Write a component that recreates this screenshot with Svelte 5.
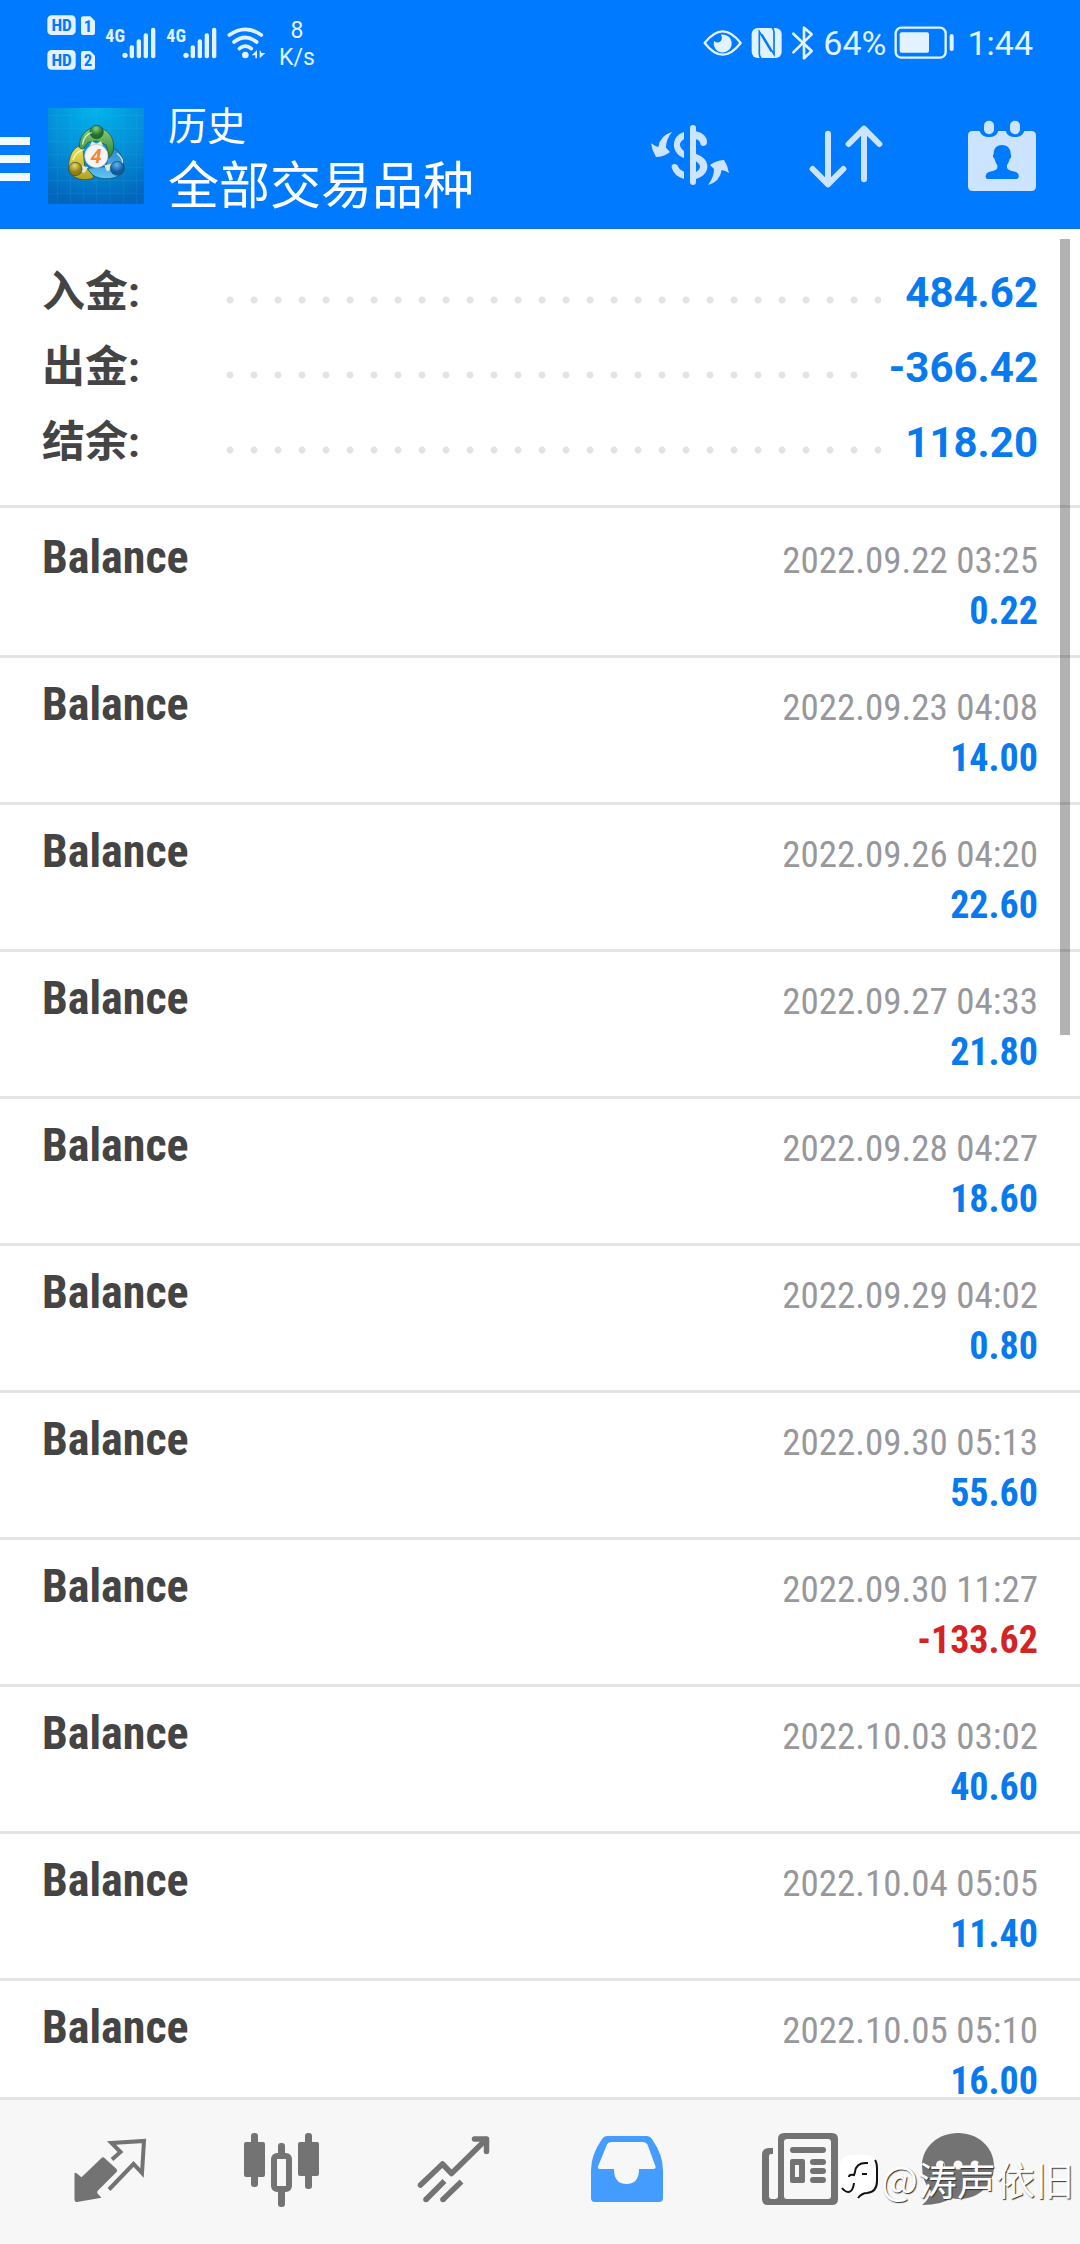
<script lang="ts">
  const summary: Array<{ label: string; value: string }> = [
    { label: '入金:', value: '484.62' },
    { label: '出金:', value: '-366.42' },
    { label: '结余:', value: '118.20' }
  ];

  const deals: Array<{ time: string; amount: number }> = [
    { time: '2022.09.22 03:25', amount: 0.22 },
    { time: '2022.09.23 04:08', amount: 14 },
    { time: '2022.09.26 04:20', amount: 22.6 },
    { time: '2022.09.27 04:33', amount: 21.8 },
    { time: '2022.09.28 04:27', amount: 18.6 },
    { time: '2022.09.29 04:02', amount: 0.8 },
    { time: '2022.09.30 05:13', amount: 55.6 },
    { time: '2022.09.30 11:27', amount: -133.62 },
    { time: '2022.10.03 03:02', amount: 40.6 },
    { time: '2022.10.04 05:05', amount: 11.4 },
    { time: '2022.10.05 05:10', amount: 16 }
  ];
</script>

<div class="app">
  <header>
    <div class="status-bar">
      <div class="status-group">
        <svg class="hd" viewBox="141 45 147 165">
          <rect x="142" y="46" width="85" height="59" rx="13" />
          <path d="M249 49h22l14 14v36q0 6-6 6h-30q-6 0-6-6V55q0-6 6-6z" />
          <rect x="142" y="150" width="85" height="59" rx="13" />
          <path d="M249 153h22l14 14v36q0 6-6 6h-30q-6 0-6-6v-44q0-6 6-6z" />
          <g class="knockout">
            <text x="185" y="94" font-size="52">HD</text>
            <text x="264" y="95" font-size="50">1</text>
            <text x="185" y="198" font-size="52">HD</text>
            <text x="264" y="199" font-size="50">2</text>
          </g>
        </svg>
        {#each [1, 2] as sim}
          <svg class="signal" viewBox="318 60 156 132" aria-label="SIM {sim}">
            <text x="319" y="122" font-size="54">4G</text>
            <circle cx="378" cy="163" r="8" />
            <rect x="392" y="133" width="13" height="39" rx="6" />
            <rect x="413" y="115" width="13" height="57" rx="6" />
            <rect x="434" y="97" width="13" height="75" rx="6" />
            <rect x="456" y="80" width="13" height="92" rx="6" />
          </svg>
        {/each}
        <svg class="wifi" viewBox="680 78 117 96">
          <g fill="none" stroke="#e2f3ff" stroke-width="11" stroke-linecap="round">
            <path d="M687 102Q735 68 783 102" />
            <path d="M701 123Q735 96 769 123" />
            <path d="M717 143Q735 128 753 143" />
          </g>
          <circle cx="735" cy="162" r="10" />
          <path d="M770 147v25h-5v-9h-11zM778 147v25l17-16h-11z" />
        </svg>
        <div class="speed">
          <span>8</span>
          <span>K/s</span>
        </div>
      </div>
      <div class="status-group system">
        <svg class="eye" viewBox="190 78 120 96">
          <path d="M195 126Q249 56 303 126Q249 196 195 126z" fill="none" stroke="#e2f3ff" stroke-width="7" stroke-linejoin="round" />
          <path d="M243 101a27 27 0 1 1-20 19a13 13 0 1 0 20-19z" />
        </svg>
        <svg class="nfc" viewBox="338 78 96 96">
          <rect x="340" y="81" width="90" height="90" rx="18" />
          <path d="M369 173q-6-6-6-14V92l36 60M401 79q6 6 6 14v67l-36-60" fill="none" stroke="#007aff" stroke-width="5" />
        </svg>
        <svg class="bluetooth" viewBox="460 72 72 108">
          <path d="M467 98l55 52-23 22V80l23 20-55 54" fill="none" stroke="#e2f3ff" stroke-width="8" stroke-linecap="round" stroke-linejoin="round" />
        </svg>
        <span class="clock">64%</span>
        <svg class="battery" viewBox="766 78 183 99">
          <rect x="771" y="83" width="150" height="90" rx="17" fill="none" stroke="#e2f3ff" stroke-width="7" />
          <rect x="783" y="97" width="88" height="61" rx="6" />
          <rect x="933" y="102" width="12" height="51" rx="6" />
        </svg>
        <span class="clock time">1:44</span>
      </div>
    </div>

    <div class="toolbar">
      <button class="menu" aria-label="菜单"><i></i><i></i><i></i></button>
      <svg class="logo" viewBox="144 327 288 288">
        <defs>
          <radialGradient id="bg" cx="0.5" cy="0" r="1">
            <stop offset="0" stop-color="#00b4ec" />
            <stop offset="0.55" stop-color="#058dd6" />
            <stop offset="1" stop-color="#0266bd" />
          </radialGradient>
          <linearGradient id="green" x2="0" y2="1"><stop stop-color="#8fcf75" /><stop offset="1" stop-color="#27812e" /></linearGradient>
          <linearGradient id="gold" x2="0" y2="1"><stop stop-color="#f1e65a" /><stop offset="1" stop-color="#b5a01c" /></linearGradient>
          <linearGradient id="blue" x2="0" y2="1"><stop stop-color="#2f86cf" /><stop offset="1" stop-color="#5ec4f5" /></linearGradient>
          <radialGradient id="green-head" cx="0.45" cy="0.25"><stop stop-color="#8ad07c" /><stop offset="1" stop-color="#1e6f28" /></radialGradient>
          <radialGradient id="gold-head" cx="0.45" cy="0.25"><stop stop-color="#e9dc66" /><stop offset="1" stop-color="#927d13" /></radialGradient>
          <radialGradient id="blue-head" cx="0.45" cy="0.25"><stop stop-color="#62b6ee" /><stop offset="1" stop-color="#0c5ba4" /></radialGradient>
        </defs>
        <rect x="144" y="327" width="288" height="288" fill="url(#bg)" />
        <path d="M172 327v288M212 327v288M251 327v288M290 327v288M330 327v288M370 327v288M409 327v288M144 350h288M144 389h288M144 428h288M144 467h288M144 506h288M144 545h288M144 584h288" stroke="#4fc3f2" stroke-opacity="0.2" stroke-width="2" />
        <g stroke="#174a4b" stroke-width="2">
          <path d="M262 508c10 22 32 32 62 31 24-2 42-10 46-28 4-30-8-54-28-62l-14 10-10 44z" fill="url(#blue)" />
          <path d="M250 438c-30 2-46 34-44 72 4 24 36 38 66 30 10-3 10-6 6-12l-24-28-4-40z" fill="url(#gold)" />
          <path d="M238 446c-2-32 20-60 50-60 34 0 54 28 53 58-1 18-8 28-14 32l-8-38-30-12-24 4-16 22z" fill="url(#green)" />
          <path d="M276 426l13 8 14-8 6 14h-40zM242 500l-3 16 14 6 12-18zM336 494l-3 18-12 5-8-18z" fill="#dce9d5" stroke="none" />
          <circle cx="290" cy="399" r="20" fill="url(#green-head)" />
          <circle cx="226" cy="510" r="20" fill="url(#gold-head)" />
          <circle cx="352" cy="508" r="21" fill="url(#blue-head)" />
        </g>
        <path d="M248 435q4-26 26-34M219 482q8-24 32-30M352 464q16 12 16 26" fill="none" stroke="#fff" stroke-opacity="0.75" stroke-width="4" stroke-linecap="round" />
        <circle cx="289" cy="471" r="35" fill="#f5f5f5" stroke="#b9b9b9" stroke-width="2" />
        <text x="288" y="492" class="four">4</text>
      </svg>
      <div class="titles">
        <h2>历史</h2>
        <h1>全部交易品种</h1>
      </div>
      <button class="action" aria-label="货币">
        <svg viewBox="6 327 288 288">
          <path d="M96 396Q60 406 55 441Q44 438 33 430Q36 452 48 471Q72 471 90 456L78 443Q78 418 96 396z" />
          <path d="M204 555Q240 545 245 510Q256 512 267 519Q264 498 252 480Q228 481 210 495L222 507Q222 532 204 555z" />
          <rect x="150" y="375" width="18" height="180" rx="9" />
          <path d="M132 396v21q-24 17 0 36v21c-40-14-40-66 0-78z" />
          <path d="M132 537v-22q-14-5-18-16c-5-11-21-9-19 3q6 26 37 35z" />
          <path d="M168 394c20 4 34 18 33 33 0 14-20 15-20 3q-3-10-13-12z" />
          <path d="M168 462c46 15 46 61 0 75v-21q24-15 0-32z" />
        </svg>
      </button>
      <button class="action" aria-label="排序">
        <svg viewBox="474 327 288 288">
          <path d="M564 401v152M518 507l46 46 46-46M672 538V386M626 432l46-46 46 46" fill="none" stroke="#cce4ff" stroke-width="18" stroke-linecap="round" stroke-linejoin="round" />
        </svg>
      </button>
      <button class="action" aria-label="日期">
        <svg viewBox="942 327 288 288">
          <path d="M998 393h21q5 18 28 18t28-18h22q5 18 28 18t28-18h21q14 0 14 14v152q0 14-14 14H998q-14 0-14-14V407q0-14 14-14z" />
          <rect x="1032" y="362" width="30" height="41" rx="15" />
          <rect x="1110" y="362" width="30" height="41" rx="15" />
          <path d="M1086 435c18 0 26 12 26 27 3 4 2 12-3 15-2 9-5 14-8 18v9q4 8 24 11 13 4 11 16 0 6-8 6h-84q-7 0-7-6-1-12 12-16 20-3 23-11v-9c-4-4-6-9-8-18-5-3-7-11-3-15 0-15 7-27 25-27z" fill="#007aff" />
        </svg>
      </button>
    </div>
  </header>

  <main>
    <dl class="summary">
      {#each summary as { label, value }}
        <div class="summary-row">
          <dt>{label}</dt>
          <span class="leader"></span>
          <dd>{value}</dd>
        </div>
      {/each}
    </dl>

    <ul class="deals">
      {#each deals as { time, amount }}
        <li>
          <strong>Balance</strong>
          <div class="deal-info">
            <time>{time}</time>
            <span class="amount" class:negative={amount < 0}>{amount.toFixed(2)}</span>
          </div>
        </li>
      {/each}
    </ul>
  </main>
  <div class="scroll-thumb"></div>

  <nav>
    <a href="#quotes" aria-label="行情">
      <svg viewBox="0 0 96 96">
        <path d="M12.500 50q0-2 2-.8L19.500 53.300 39.500 34q1.500-1.500 3 0l12 11q1.500 1.500 0 3L36 66.500q-1.500 1.500-.5 3l4 4.200L15 78q-2.500.3-2.500-2.500z" />
        <path d="M50 35.500l8.500-7.500-9-9L82 17l-2 32-8.500-9L47 65.500" fill="none" stroke="#737373" stroke-width="4" />
      </svg>
    </a>
    <a href="#chart" aria-label="图表">
      <svg viewBox="0 0 96 96">
        <rect x="10" y="18" width="21" height="35" rx="2" />
        <rect x="17" y="9" width="7" height="54" rx="3" />
        <rect x="64" y="18" width="21" height="34" rx="2" />
        <rect x="71" y="9" width="7" height="56" rx="3" />
        <rect x="44" y="19" width="7" height="14" rx="3" />
        <rect x="44" y="64" width="7" height="19" rx="3" />
        <rect x="40" y="32" width="15" height="33" rx="3" fill="none" stroke="#737373" stroke-width="6" />
      </svg>
    </a>
    <a href="#trade" aria-label="交易">
      <svg viewBox="0 0 96 96">
        <g fill="none" stroke="#737373" stroke-width="5.500" stroke-linejoin="round">
          <path d="M14.500 61L36.500 40l9 9.500L80 15.500" stroke-linecap="round" />
          <path d="M68.500 15h12v12.500" stroke-linecap="round" />
          <path d="M20 75.500L38.500 57M37 75.500L55.500 57.500" />
        </g>
        <circle cx="20" cy="75.500" r="2.800" />
        <circle cx="37" cy="75.500" r="2.800" />
      </svg>
    </a>
    <a href="#history" class="active" aria-label="历史" aria-current="page">
      <svg viewBox="0 0 96 96">
        <path fill-rule="evenodd" d="M29 12h40q3 0 5 3 11 16 11 31v28q0 4-4 4H17q-4 0-4-4V46q0-15 11-31 2-3 5-3zM33 18q-3 0-4 2.500l-9 22Q19.500 45 22 45h14q0 15 12.500 15T61 45h14q3 0 2.500-2.500l-8-22Q68 18 65 18z" />
      </svg>
    </a>
    <a href="#news" aria-label="新闻">
      <svg viewBox="0 0 96 96">
        <path fill-rule="evenodd" d="M34 9h48q6 0 6 6v60q0 6-6 6H18q-6 0-6-6V31q0-7 7-7h4v6h-2q-2 0-2 2v40q0 3 3 3h3q3 0 3-3V15q0-6 6-6zM37 15q-3 0-3 3v54q0 3 3 3h41q3 0 3-3V18q0-3-3-3z" />
        <rect x="40" y="23" width="36" height="6" rx="3" />
        <path fill-rule="evenodd" d="M42 35h11q2 0 2 2v20q0 2-2 2H42q-2 0-2-2V37q0-2 2-2zM45 41v12h4V41z" />
        <rect x="60" y="35" width="16" height="6" rx="3" />
        <rect x="60" y="44" width="16" height="6" rx="3" />
        <rect x="60" y="53" width="16" height="6" rx="3" />
      </svg>
    </a>
    <a href="#chat" aria-label="聊天">
      <svg viewBox="0 0 96 96">
        <path d="M36 9c20 0 36 14 36 33S56 75 38 75q-5 0-9-1-9 7-29 7 7-5 9-14Q0 58 0 42C0 23 16 9 36 9z" />
        <g fill="#f7f7f7"><circle cx="18.500" cy="41" r="4.500" /><circle cx="36" cy="41" r="4.500" /><circle cx="53" cy="41" r="4.500" /></g>
      </svg>
    </a>
  </nav>

  <div class="watermark">
    <svg viewBox="0 0 38 46">
      <path d="M12 0h14q11 0 11 11v16q0 11-11 11h-3l-5 6-2-6h-4Q0 38 0 27V11Q0 0 12 0z" fill="#fff" />
      <path d="M28 8q-12-1-13 9l-1 3q-5-1-5 2M22 19h5M14 28q-1 8-5 9-4 0-7-4" fill="none" stroke="#111" stroke-width="2" />
      <path d="M35 5q2 3 2 9v12q0 11-10 12-5 0-9 5" fill="none" stroke="#111" stroke-width="2" />
    </svg>
    <span>@涛声依旧</span>
  </div>
</div>

<style>
  :global(body) {
      background-color: #fff;
  }

  .app {
      position: relative;
      display: flex;
      flex-direction: column;
      height: 100vh;
      overflow: hidden;
      font-family: Roboto, 'Noto Sans CJK SC', sans-serif;
      color: #444;
  }

  header {
      flex: none;
      background-color: #007aff;
      border-bottom: 2px solid #1272d6;
      color: #fff;
  }

  .status-bar {
      display: flex;
      justify-content: space-between;
      align-items: center;
      height: 85px;
      padding: 0 47px;
      color: #e2f3ff;
  }

  .status-group {
      display: flex;
      align-items: center;
      gap: 9px;
  }

  .status-group.system {
      gap: 8px;
  }

  .status-group svg {
      fill: #e2f3ff;
  }

  .status-group text {
      font-family: 'Roboto Condensed', 'Liberation Sans Narrow', sans-serif;
      font-weight: bold;
  }

  .status-group .knockout {
      fill: #007aff;
      text-anchor: middle;
  }

  .hd {
      width: 49px;
      height: 55px;
  }

  .signal {
      width: 52px;
      height: 44px;
  }

  .wifi {
      width: 39px;
      height: 32px;
  }

  .speed {
      display: flex;
      flex-direction: column;
      align-items: center;
      width: 44px;
      padding-top: 2px;
      font-size: 23px;
      line-height: 27px;
  }

  .eye {
      width: 40px;
      height: 32px;
  }

  .nfc {
      width: 32px;
      height: 32px;
  }

  .bluetooth {
      width: 24px;
      height: 36px;
  }

  .battery {
      width: 61px;
      height: 33px;
  }

  .clock {
      font-size: 34px;
      line-height: 40px;
  }

  .clock.time {
      margin-left: 4px;
  }

  .toolbar {
      display: flex;
      align-items: center;
      height: 142px;
  }

  button {
      padding: 0;
      border: none;
      background: none;
      cursor: pointer;
  }

  .menu {
      display: flex;
      flex-direction: column;
      gap: 10px;
      width: 30px;
      margin-right: 18px;
      padding-top: 6px;
  }

  .menu i {
      width: 100%;
      height: 8px;
      background-color: #f0faff;
  }

  .logo {
      width: 96px;
      height: 96px;
      margin-right: 24px;
  }

  .four {
      font-size: 60px;
      font-weight: bold;
      font-style: italic;
      text-anchor: middle;
      fill: #f08a35;
  }

  .titles {
      flex: 1;
      padding-top: 6px;
  }

  h1,
  h2 {
      margin: 0;
      font-weight: normal;
      white-space: nowrap;
  }

  h1 {
      font-size: 51px;
      line-height: 64px;
  }

  h2 {
      font-size: 39px;
      line-height: 56px;
  }

  .action {
      width: 156px;
      padding-top: 2px;
  }

  .action svg {
      display: block;
      width: 96px;
      height: 96px;
      margin: 0 auto;
      fill: #cce4ff;
  }

  main {
      flex: 1;
      min-height: 0;
      overflow-y: auto;
      scrollbar-width: none;
  }

  .summary {
      margin: 0;
      padding: 26px 42px 25px;
      border-bottom: 3px solid #e4e4e4;
  }

  .summary-row {
      display: flex;
      align-items: center;
      font-size: 42px;
      font-weight: bold;
      line-height: 75px;
  }

  dt {
      width: 176px;
      font-size: 43px;
  }

  dd {
      margin: 0 0 0 24px;
      color: #087aee;
  }

  .leader {
      flex: 1;
      height: 8px;
      margin-top: 14px;
      background: radial-gradient(circle, #e4e4e4 3px, transparent 4px) 0 0 / 24px 8px repeat-x;
  }

  .deals {
      margin: 0;
      padding: 3px 0 0;
      list-style: none;
      font-family: 'Roboto Condensed', 'Liberation Sans Narrow', Roboto, sans-serif;
  }

  .deals li {
      display: flex;
      justify-content: space-between;
      align-items: baseline;
      box-sizing: border-box;
      height: 147px;
      padding: 18px 42px 0;
      border-bottom: 3px solid #e4e4e4;
  }

  .deals strong {
      font-size: 46px;
      line-height: 56px;
  }

  .deal-info {
      display: flex;
      flex-direction: column;
      align-items: flex-end;
      font-size: 38px;
      line-height: 51px;
  }

  .deal-info time {
      font-size: 37px;
      color: #98989c;
  }

  .amount {
      font-weight: bold;
      color: #087aee;
  }

  .amount.negative {
      color: #d32323;
  }

  .scroll-thumb {
      position: absolute;
      top: 239px;
      right: 10px;
      width: 10px;
      height: 796px;
      background-color: rgba(0, 0, 0, 0.3);
  }

  nav {
      flex: none;
      display: flex;
      padding: 0 24px;
      border-top: 3px solid #e4e4e4;
      background-color: #f7f7f7;
  }

  nav a {
      flex: 1;
      display: flex;
      justify-content: center;
      padding: 24px 0;
  }

  nav svg {
      width: 96px;
      height: 96px;
      fill: #737373;
  }

  nav .active svg {
      fill: #459cff;
  }

  .watermark {
      position: absolute;
      right: 6px;
      bottom: 40px;
      display: flex;
      align-items: center;
      gap: 3px;
      font-family: 'Noto Sans CJK SC', sans-serif;
      font-size: 39px;
      line-height: 52px;
      color: #fff;
      text-shadow: 1px 1px 1px #333;
  }

  .watermark svg {
      width: 38px;
      height: 46px;
  }
</style>
